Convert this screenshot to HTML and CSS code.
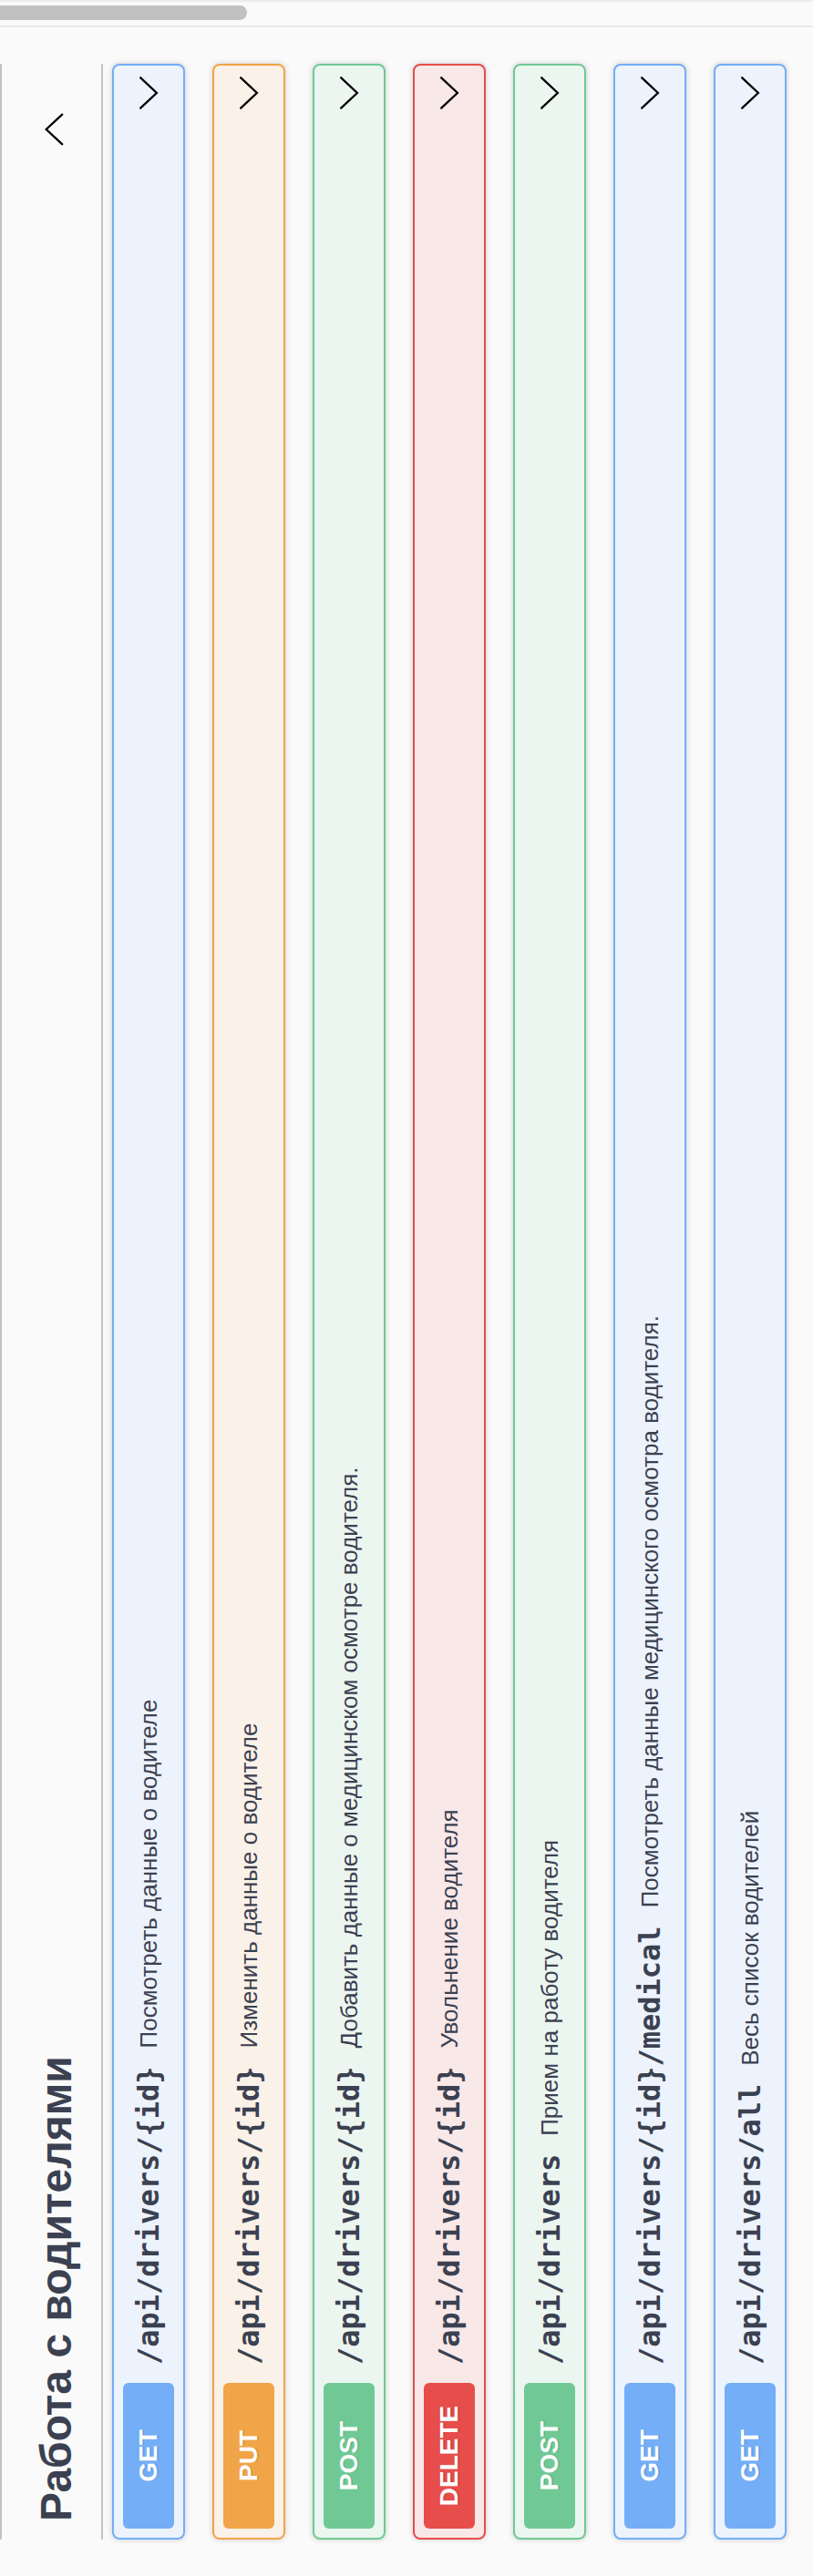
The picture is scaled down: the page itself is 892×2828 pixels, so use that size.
FILE: index.html
```html
<!DOCTYPE html>
<html lang="ru">
<head>
<meta charset="utf-8">
<title>Работа с водителями</title>
<link rel="stylesheet" href="styles.css">
</head>
<body>
<div class="viewport">
  <div class="page">
    <main class="main">
      <div class="wrapper">
        <div class="prev"></div>
        <section class="tag-section">
          <h3 class="tag">
            <span class="tag-title">Работа с водителями</span>
            <svg class="tag-arrow" width="40" height="40" viewBox="0 0 40 40" aria-hidden="true"><polyline points="3.7,29.3 20,11.7 36.3,29.3"/></svg>
          </h3>
          <div class="ops">
            <div class="opblock get">
              <div class="summary">
                <span class="method">GET</span>
                <span class="path">/api/drivers/{id}</span>
                <span class="desc">Посмотреть данные о водителе</span>
                <svg class="arrow" width="40" height="40" viewBox="0 0 40 40" aria-hidden="true"><polyline points="3.3,11.2 20,28.9 36.7,11.2"/></svg>
              </div>
            </div>
            <div class="opblock put">
              <div class="summary">
                <span class="method">PUT</span>
                <span class="path">/api/drivers/{id}</span>
                <span class="desc">Изменить данные о водителе</span>
                <svg class="arrow" width="40" height="40" viewBox="0 0 40 40" aria-hidden="true"><polyline points="3.3,11.2 20,28.9 36.7,11.2"/></svg>
              </div>
            </div>
            <div class="opblock post">
              <div class="summary">
                <span class="method">POST</span>
                <span class="path">/api/drivers/{id}</span>
                <span class="desc">Добавить данные о медицинском осмотре водителя.</span>
                <svg class="arrow" width="40" height="40" viewBox="0 0 40 40" aria-hidden="true"><polyline points="3.3,11.2 20,28.9 36.7,11.2"/></svg>
              </div>
            </div>
            <div class="opblock delete">
              <div class="summary">
                <span class="method">DELETE</span>
                <span class="path">/api/drivers/{id}</span>
                <span class="desc">Увольнение водителя</span>
                <svg class="arrow" width="40" height="40" viewBox="0 0 40 40" aria-hidden="true"><polyline points="3.3,11.2 20,28.9 36.7,11.2"/></svg>
              </div>
            </div>
            <div class="opblock post">
              <div class="summary">
                <span class="method">POST</span>
                <span class="path">/api/drivers</span>
                <span class="desc">Прием на работу водителя</span>
                <svg class="arrow" width="40" height="40" viewBox="0 0 40 40" aria-hidden="true"><polyline points="3.3,11.2 20,28.9 36.7,11.2"/></svg>
              </div>
            </div>
            <div class="opblock get">
              <div class="summary">
                <span class="method">GET</span>
                <span class="path">/api/drivers/{id}/medical</span>
                <span class="desc">Посмотреть данные медицинского осмотра водителя.</span>
                <svg class="arrow" width="40" height="40" viewBox="0 0 40 40" aria-hidden="true"><polyline points="3.3,11.2 20,28.9 36.7,11.2"/></svg>
              </div>
            </div>
            <div class="opblock get">
              <div class="summary">
                <span class="method">GET</span>
                <span class="path">/api/drivers/all</span>
                <span class="desc">Весь список водителей</span>
                <svg class="arrow" width="40" height="40" viewBox="0 0 40 40" aria-hidden="true"><polyline points="3.3,11.2 20,28.9 36.7,11.2"/></svg>
              </div>
            </div>
          </div>
        </section>
      </div>
    </main>
    <div class="scrollbar"><div class="thumb"></div></div>
  </div>
</div>
</body>
</html>
```
FILE: styles.css
```css
* { box-sizing: border-box; }

html, body {
  margin: 0;
  padding: 0;
  background: #fafafa;
}

.viewport {
  width: 892px;
  height: 2828px;
  overflow: hidden;
}

.page {
  width: 2828px;
  height: 892px;
  display: flex;
  transform-origin: 0 0;
  transform: rotate(-90deg) translateX(-100%);
  background: #fafafa;
  color: #3b4151;
}

.main {
  flex: 1 1 auto;
  min-width: 0;
  background: #fafafa;
}

.wrapper {
  padding: 0 40px;
}

.prev {
  border-bottom: 2px solid #c1c3c7;
}

.tag {
  margin: 0 0 10px;
  height: 111px;
  padding: 10px 52px 0 20px;
  display: flex;
  align-items: center;
  border-bottom: 2px solid #c1c3c7;
  font-family: "Liberation Sans", Arial, sans-serif;
  font-weight: 700;
  font-size: 48px;
  line-height: 55px;
  color: #3b4151;
}

.tag-title {
  flex: 1 1 auto;
}

.tag-arrow {
  flex: none;
  margin-bottom: 5px;
}

.tag-arrow polyline,
.arrow polyline {
  fill: none;
  stroke: #000;
  stroke-width: 2.3;
  stroke-linecap: round;
  stroke-linejoin: miter;
}

.opblock {
  height: 80px;
  margin: 0 0 30px;
  border: 2px solid #73aef7;
  border-radius: 8px;
  box-shadow: 0 0 6px rgba(0, 0, 0, 0.19);
  background: #edf3fc;
}

.summary {
  height: 76px;
  padding: 10px;
  display: flex;
  align-items: center;
}

.method {
  flex: none;
  width: 160px;
  height: 56px;
  border-radius: 6px;
  background: #73aef7;
  color: #fff;
  font-family: "Liberation Sans", Arial, sans-serif;
  font-weight: 700;
  font-size: 28px;
  line-height: 56px;
  text-align: center;
  text-shadow: 0 2px 0 rgba(0, 0, 0, 0.1);
}

.path {
  flex: none;
  padding: 0 20px;
  font-family: "DejaVu Sans Mono", monospace;
  font-weight: 700;
  font-size: 32px;
  line-height: 40px;
  color: #3b4151;
  white-space: nowrap;
}

.desc {
  flex: 1 1 auto;
  font-family: "Liberation Sans", Arial, sans-serif;
  font-size: 26px;
  line-height: 32px;
  color: #3b4151;
  white-space: nowrap;
}

.arrow {
  flex: none;
}

.opblock.put { border-color: #f0a548; background: #faf1e8; }
.opblock.put .method { background: #f0a548; }

.opblock.post { border-color: #70c995; background: #ecf6f0; }
.opblock.post .method { background: #70c995; }

.opblock.delete { border-color: #e74d4a; background: #f9e8e8; }
.opblock.delete .method { background: #e74d4a; }

.scrollbar {
  flex: none;
  width: 30px;
  height: 892px;
  background: #fafafa;
  border-left: 2px solid #e8e8e8;
  border-right: 2px solid #ebebeb;
  padding-left: 6px;
}

.thumb {
  width: 16px;
  height: 271px;
  background: #c1c1c1;
  border-radius: 0 0 8px 8px;
}
```
